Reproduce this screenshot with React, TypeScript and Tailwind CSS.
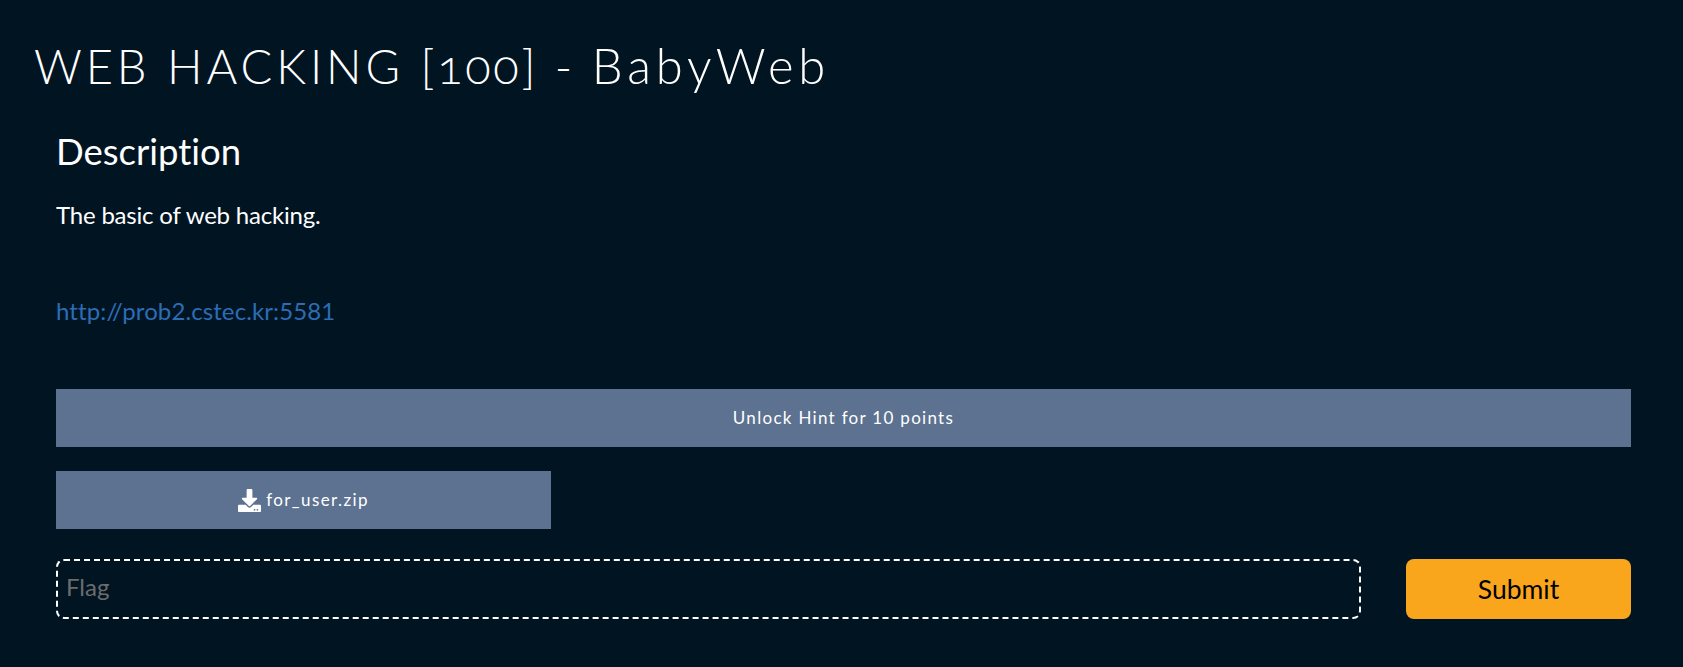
import React from 'react';

function DownloadIcon() {
  return (
    <svg viewBox="0 0 512 512" className="w-[23px] h-[23px] fill-white shrink-0">
      <path d="M216 0h80c13.3 0 24 10.700 24 24v168h87.700c17.800 0 26.700 21.500 14.100 34.100L269.700 378.300c-7.500 7.500-19.800 7.500-27.300 0L90.100 226.100c-12.600-12.600-3.700-34.100 14.100-34.100H192V24c0-13.300 10.700-24 24-24zm296 376v112c0 13.300-10.700 24-24 24H24c-13.300 0-24-10.700-24-24V376c0-13.300 10.700-24 24-24h146.700l49 49c20.100 20.100 52.500 20.100 72.600 0l49-49H488c13.300 0 24 10.700 24 24zm-124 88c0-11-9-20-20-20s-20 9-20 20 9 20 20 20 20-9 20-20zm64 0c0-11-9-20-20-20s-20 9-20 20 9 20 20 20 20-9 20-20z" />
    </svg>
  );
}

export default function App() {
  return (
    <div className="min-h-[667px] bg-[#011422] text-white font-['Lato','Liberation_Sans',sans-serif] [font-variant-ligatures:none] overflow-hidden">
      <h1 className="pt-[32px] pl-[34px] h-[130px] text-[47px] leading-[66px] font-light tracking-[3.9px] oldstyle-nums">
        WEB HACKING <span className="tracking-[2.7px]">[100]</span> <span className="tracking-[3px]">-</span> <span className="text-[49px] tracking-[4.8px]">BabyWeb</span>
      </h1>
      <div className="pl-[56px] pr-[52px]">
        <h2 className="text-[36.5px] leading-[42px] font-normal">Description</h2>
        <p className="mt-[25px] text-[24px] leading-[36px] tracking-[-0.2px]">The basic of web hacking.</p>
        <p className="mt-[60px] text-[24px] leading-[36px] tracking-[0.1px]">
          <a href="#" className="text-[#2c6db6]">http://prob2.cstec.kr:5581</a>
        </p>
        <button className="mt-[60px] w-full h-[58px] bg-[#5c7290] text-white text-[17px] tracking-[1.3px]">
          Unlock Hint for 10 points
        </button>
        <button className="mt-[24px] block w-[495px] h-[58px] bg-[#5c7290] text-white text-[17px] tracking-[1.4px]">
          <span className="flex items-center justify-center gap-[5px]">
            <DownloadIcon />
            for_user.zip
          </span>
        </button>
        <div className="mt-[30px] flex justify-between">
          <input
            placeholder="Flag"
            className="w-[1305px] h-[60px] pl-[8px] pr-[9px] pb-[6px] bg-transparent border-2 border-dashed border-white rounded-[8px] text-[24px] placeholder:text-[#6c6c6c] outline-none"
          />
          <button className="w-[225px] h-[60px] pt-[2px] bg-[#faa61c] text-black text-[26.5px] rounded-[8px]">
            Submit
          </button>
        </div>
      </div>
    </div>
  );
}
